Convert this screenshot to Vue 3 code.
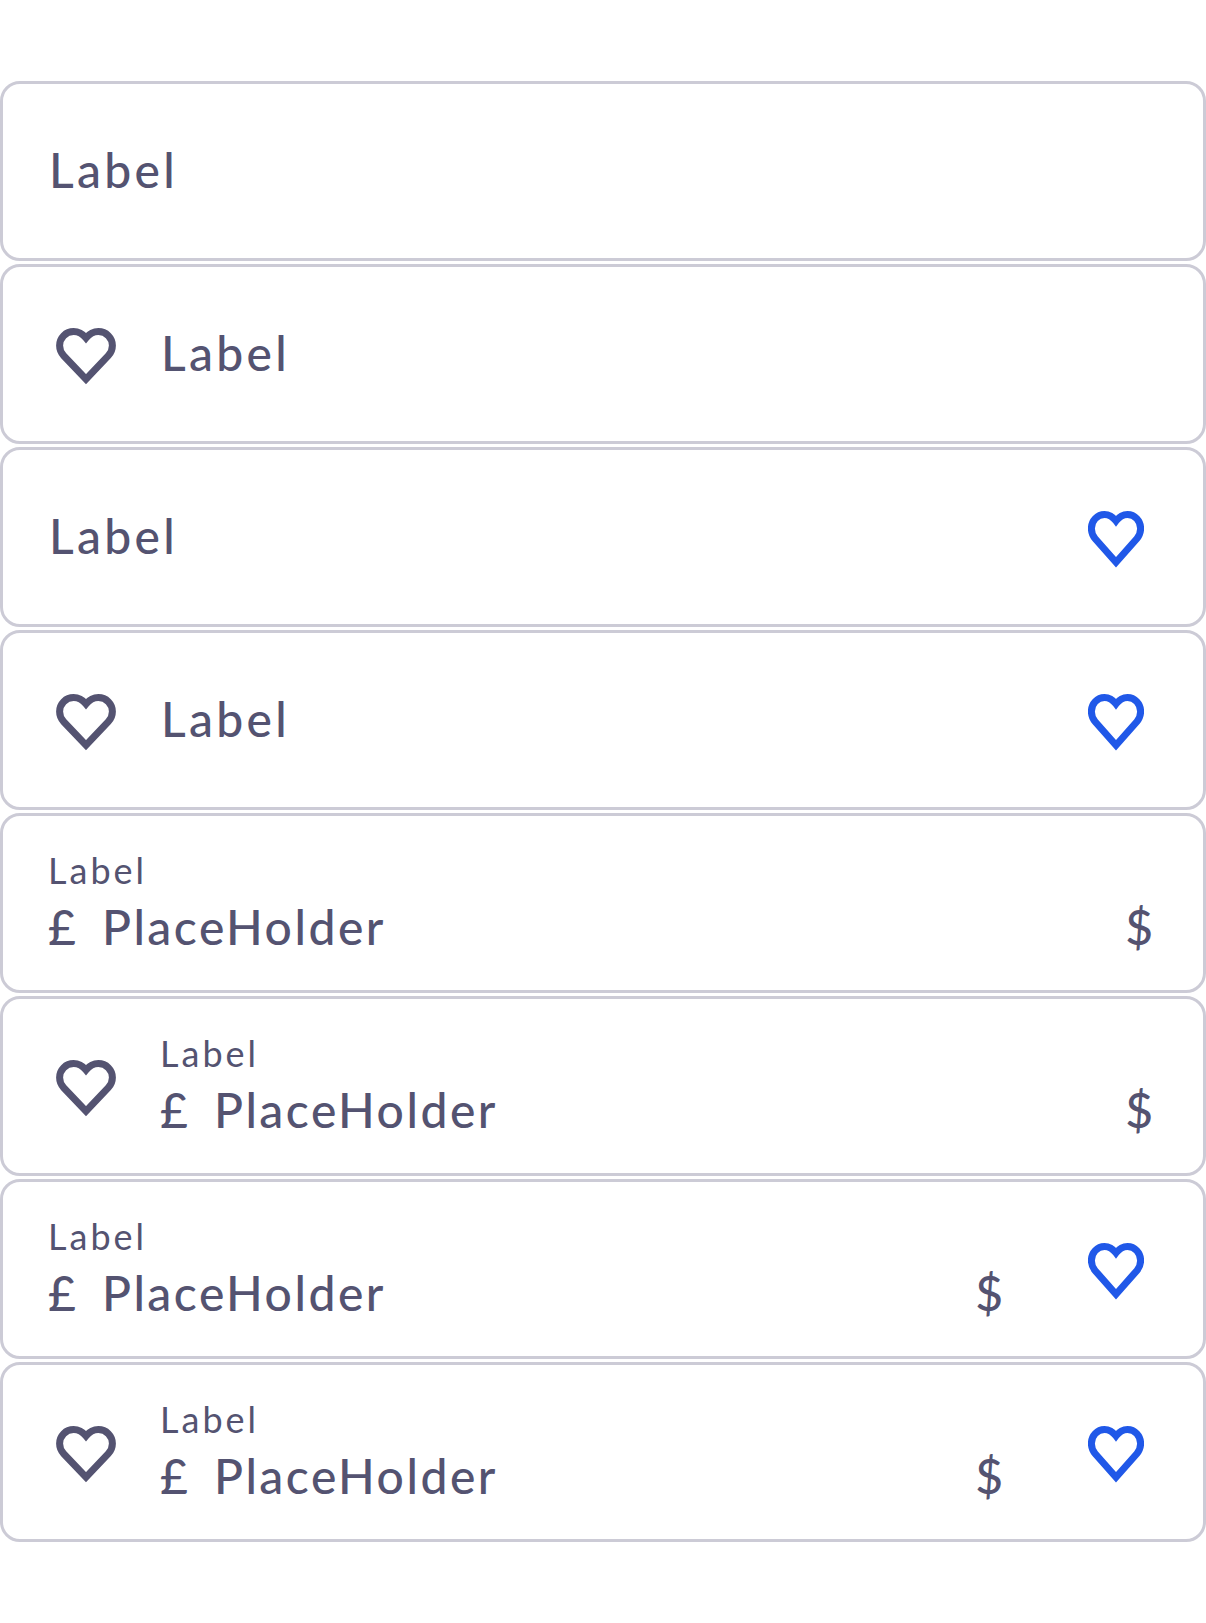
<script setup>
const fields = [
  { lead: false, trail: false, filled: false },
  { lead: true, trail: false, filled: false },
  { lead: false, trail: true, filled: false },
  { lead: true, trail: true, filled: false },
  { lead: false, trail: false, filled: true },
  { lead: true, trail: false, filled: true },
  { lead: false, trail: true, filled: true },
  { lead: true, trail: true, filled: true },
]
</script>

<template>
  <main class="fields">
    <div v-for="(field, i) in fields" :key="i" class="field">
      <svg v-if="field.lead" class="icon lead" viewBox="0 0 60 57">
        <path d="M30 10C26.5 5.8 22.5 3.6 17.6 3.6C9.8 3.6 3.6 9.8 3.6 17.6C3.6 21.5 5 24.9 7.7 27.7L30 51.2L52.3 27.7C55 24.9 56.4 21.5 56.4 17.6C56.4 9.8 50.2 3.6 42.4 3.6C37.5 3.6 33.5 5.8 30 10Z" />
      </svg>
      <div v-if="field.filled" class="content">
        <span class="caption">Label</span>
        <div class="value">
          <span class="prefix">£</span>
          <span class="placeholder">PlaceHolder</span>
          <span class="suffix">$</span>
        </div>
      </div>
      <div v-else class="content">
        <span class="label">Label</span>
      </div>
      <svg v-if="field.trail" class="icon trail" viewBox="0 0 56 57">
        <path d="M28 10C24.8 5.8 21 3.5 16.5 3.5C9.2 3.5 3.4 9.7 3.4 17.5C3.4 21.4 4.7 24.8 7.2 27.7L28 51.2L48.8 27.7C51.3 24.8 52.6 21.4 52.6 17.5C52.6 9.7 46.8 3.5 39.5 3.5C35 3.5 31.2 5.8 28 10Z" />
      </svg>
    </div>
  </main>
</template>

<style>
body {
  margin: 0;
  background: #fff;
}
</style>

<style scoped>
.fields {
  display: flex;
  flex-direction: column;
  gap: 3px;
  padding: 81px 0;
  color: #545371;
  font-family: "Lato Medium", Lato, sans-serif;
  font-weight: 500;
}
.field {
  box-sizing: border-box;
  display: flex;
  align-items: center;
  height: 180px;
  padding: 0 47px 0 45px;
  border: 3px solid #cccbd6;
  border-radius: 20px;
}
.icon {
  flex: none;
  height: 57px;
  fill: none;
  stroke-width: 7;
}
.lead {
  width: 60px;
  margin: 4px 44px 0 8px;
  stroke: #545371;
}
.trail {
  width: 56px;
  margin: 4px 12px 0 82px;
  stroke: #2058e8;
}
.content {
  flex: 1;
  display: flex;
  flex-direction: column;
  white-space: nowrap;
}
.label {
  font-size: 48px;
  line-height: 60px;
  letter-spacing: 3.3px;
  padding: 0 0 3px 1px;
}
.caption {
  margin: -3px 0 3px;
  font-family: Lato, sans-serif;
  font-weight: 400;
  font-size: 36px;
  line-height: 48px;
  letter-spacing: 3px;
}
.value {
  display: flex;
  font-size: 48px;
  line-height: 60px;
}
.prefix {
  width: 54px;
}
.placeholder {
  letter-spacing: 2.5px;
}
.suffix {
  margin-left: auto;
  padding-right: 3px;
}
</style>
